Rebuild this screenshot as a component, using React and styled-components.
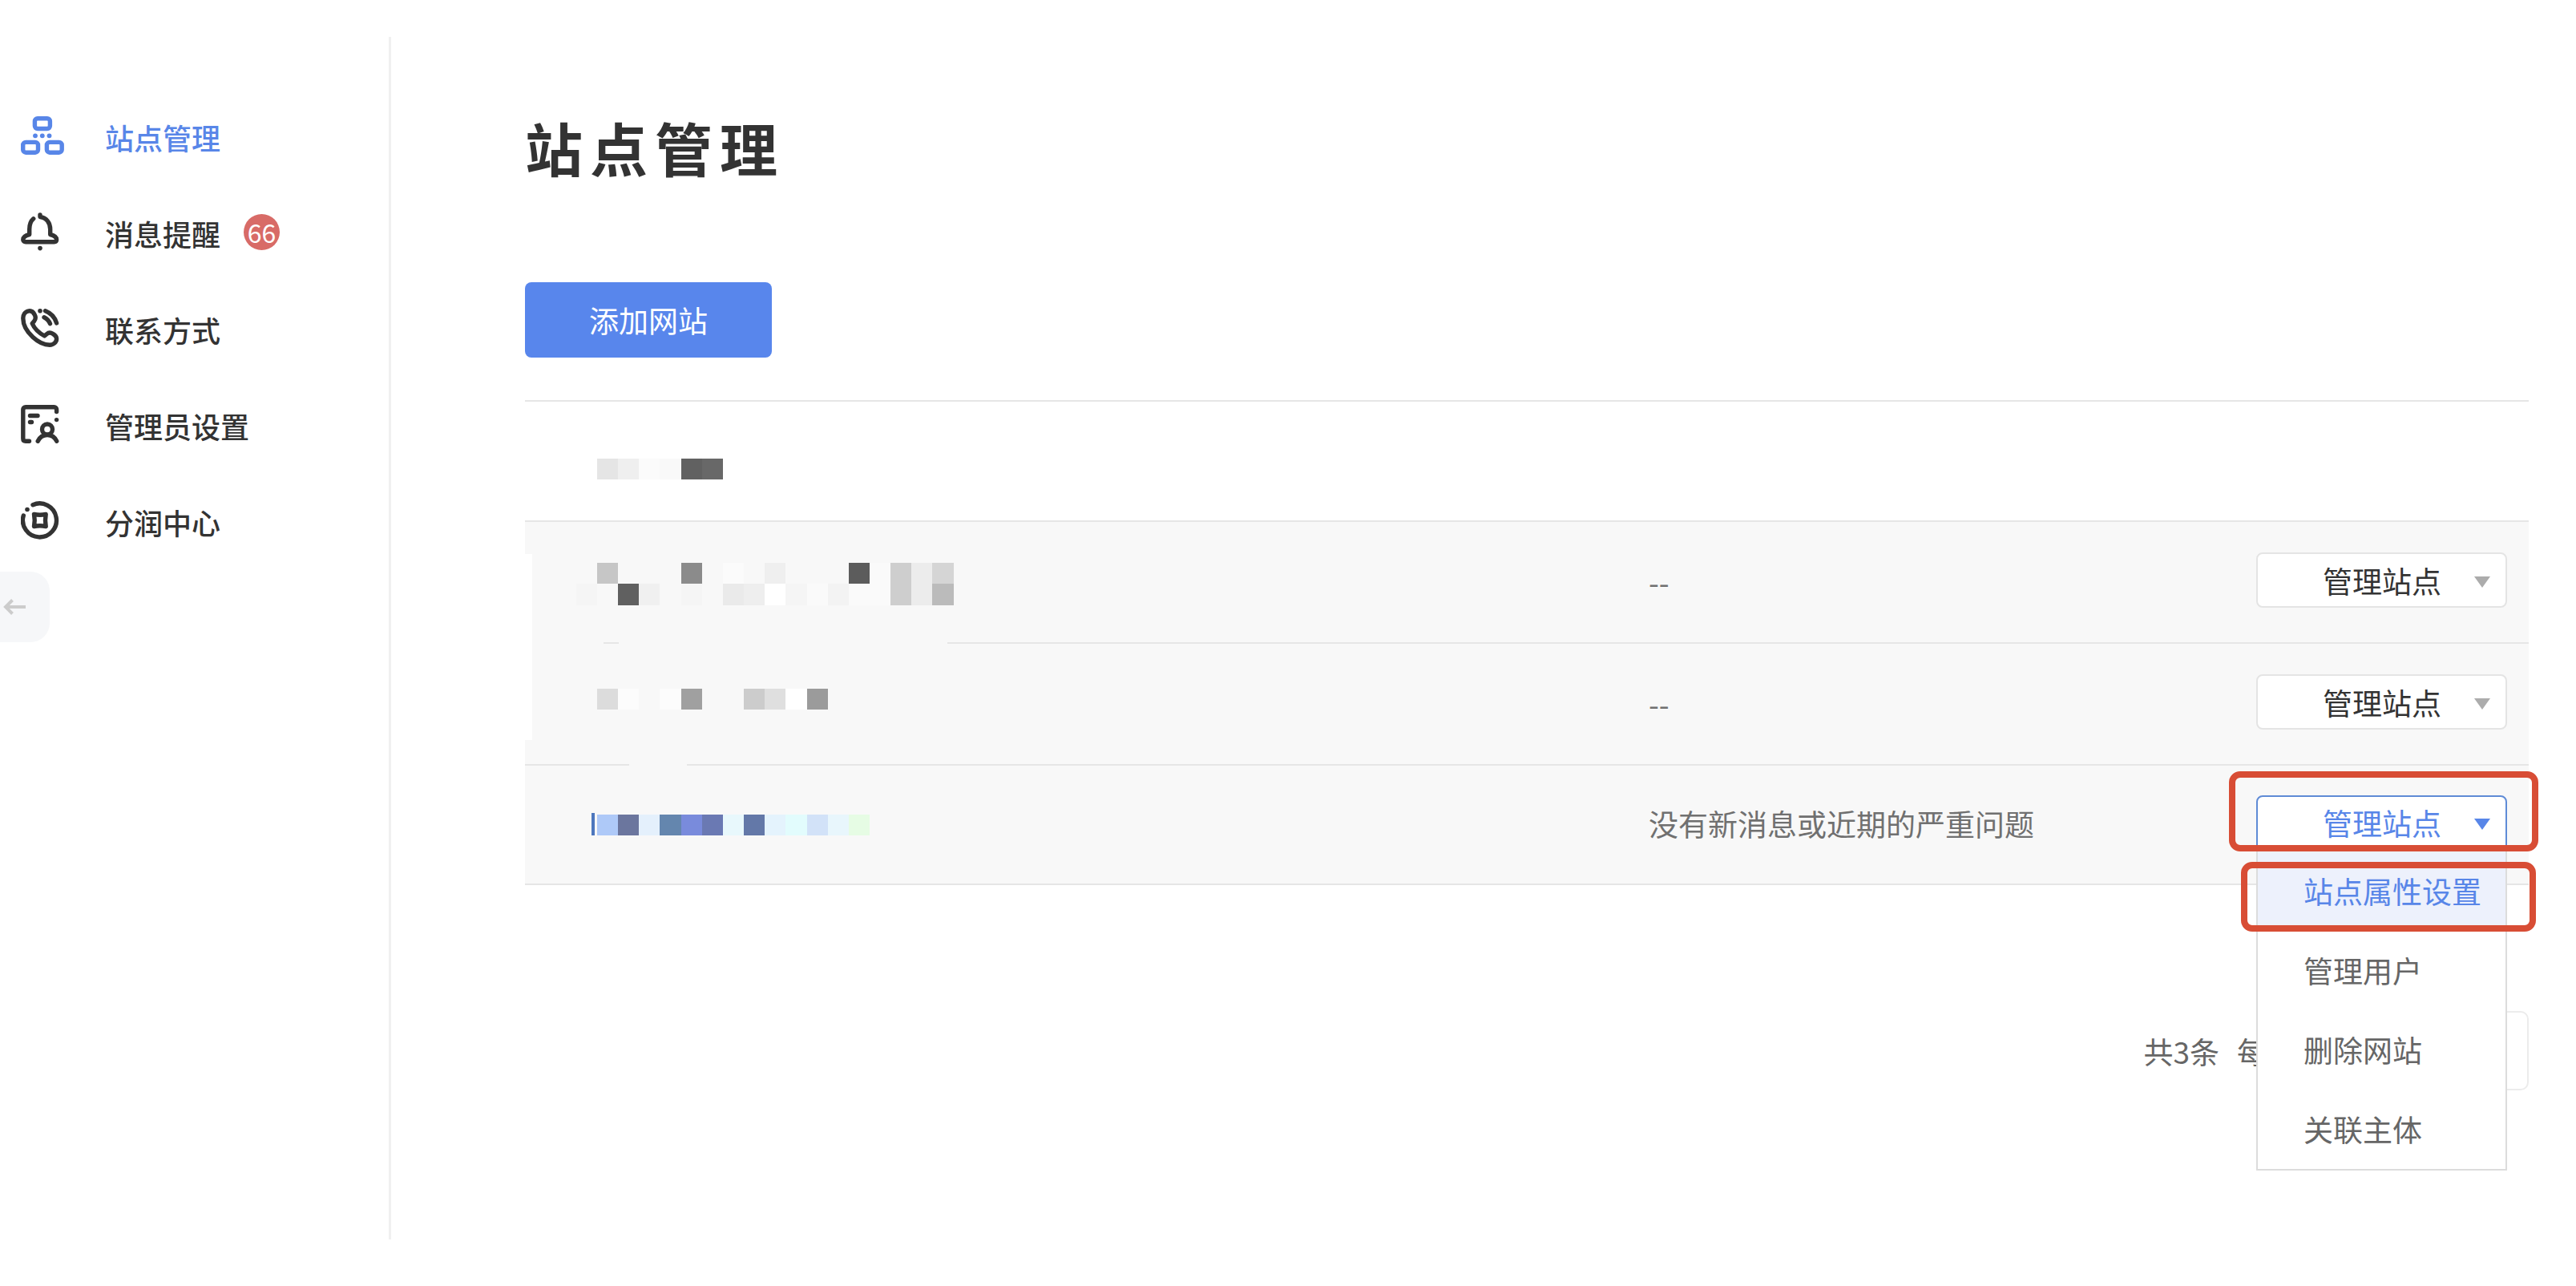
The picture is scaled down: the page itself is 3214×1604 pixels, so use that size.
import React from 'react';
import styled, { createGlobalStyle } from 'styled-components';

const blue = '#5886e8';
const line = '#e6e6e6';

const GlobalStyle = createGlobalStyle`
  * {
    box-sizing: border-box;
  }
  body {
    margin: 0;
    background: #fff;
    color: #333;
    font-family: 'Noto Sans CJK SC', sans-serif;
    font-size: 37px;
    line-height: 54px;
  }
  button, select {
    font: inherit;
  }
`;

const Page = styled.div`
  display: flex;
  min-height: 100vh;
  padding: 46px 0 58px;
`;

const Sidebar = styled.aside`
  flex: none;
  width: 488px;
  padding-top: 63px;
  border-right: 3px solid #f0f0f0;
`;

const NavList = styled.ul`
  margin: 0;
  padding: 0;
  list-style: none;
`;

const NavLink = styled.a`
  display: flex;
  align-items: center;
  height: 120px;
  padding: 4px 0 0 26px;
  color: ${props => (props.$active ? blue : '#333')};
  font-size: 36px;
  font-weight: 500;
  text-decoration: none;
`;

const NavIcon = styled.svg`
  width: 54px;
  height: 48px;
  margin: 0 51px 4px 0;
  fill: none;
  stroke: currentColor;
  stroke-width: 5.4;
  stroke-linecap: round;
  stroke-linejoin: round;

  .dot {
    fill: currentColor;
    stroke: none;
  }
`;

const Badge = styled.span`
  width: 45px;
  height: 45px;
  margin: 0 0 4px 29px;
  border-radius: 50%;
  background: #d86b67;
  color: #fff;
  font-size: 32px;
  font-weight: 400;
  line-height: 45px;
  text-align: center;
`;

const CollapseButton = styled.button`
  display: block;
  width: 62px;
  height: 88px;
  margin-top: 4px;
  padding: 0 0 0 4px;
  border: none;
  border-radius: 0 24px 24px 0;
  background: #f6f7f9;

  svg {
    display: block;
  }
`;

const Main = styled.main`
  flex: 1;
  min-width: 0;
  padding: 84px 59px 0 167px;
`;

const Title = styled.h1`
  margin: 0;
  font-size: 72px;
  font-weight: 700;
  letter-spacing: 9px;
  line-height: 106px;
`;

const AddButton = styled.button`
  display: block;
  width: 308px;
  height: 94px;
  margin: 116px 0 53px;
  padding: 0;
  border: none;
  border-radius: 8px;
  background: #5886ec;
  color: #fff;
`;

const SiteTable = styled.table`
  width: 100%;
  border-top: 2px solid ${line};
  border-spacing: 0;
  table-layout: fixed;

  th, td {
    position: relative;
    height: 152px;
    padding: 0 0 3px 2px;
    border-bottom: 2px solid ${line};
    text-align: left;
  }
  th {
    height: 150px;
  }
  tr:last-child td {
    height: 149px;
  }
  tbody {
    background: #f8f8f8;
    color: #707070;
  }
`;

const NameColumn = styled.col`
  width: 56%;
`;

const ActionColumn = styled.col`
  width: 400px;
`;

const Mosaic = styled.svg`
  position: absolute;
  top: 0;
  left: 0;
  width: 560px;
  height: 152px;
  shape-rendering: crispEdges;
`;

const ActionCell = styled.td`
  && {
    padding: 0 27px 5px 0;
  }
`;

const Dropdown = styled.div`
  position: relative;
  width: 313px;
  margin-left: auto;
`;

const ManageButton = styled.button`
  display: flex;
  align-items: center;
  justify-content: space-between;
  width: 100%;
  height: 69px;
  padding: 0 19px 0 81px;
  border: 2px solid ${props => (props.$open ? '#5f8bd6' : '#e4e4e4')};
  border-radius: ${props => (props.$open ? '8px 8px 0 0' : '8px')};
  background: #fff;
  color: ${props => (props.$open ? blue : '#333')};
`;

const Caret = styled.svg`
  width: 20px;
  height: 14px;
  margin-top: 4px;
  fill: ${props => (props.$open ? blue : '#acacac')};
`;

const Menu = styled.ul`
  position: absolute;
  top: 100%;
  left: 0;
  z-index: 1;
  width: 100%;
  margin: 1px 0 0;
  padding: 0;
  border: 2px solid #dcdcdc;
  border-top: none;
  background: #fff;
  list-style: none;
`;

const MenuItem = styled.button`
  display: block;
  width: 100%;
  height: 99px;
  padding: 0 0 0 57px;
  border: none;
  background: ${props => (props.$active ? '#edf1fc' : '#fff')};
  color: ${props => (props.$active ? blue : '#666')};
  text-align: left;
`;

const Highlight = styled.div`
  position: absolute;
  z-index: 2;
  border: 8px solid #d84d35;
  border-radius: 14px;
  pointer-events: none;
`;

const ButtonHighlight = styled(Highlight)`
  top: -30px;
  right: -39px;
  left: -34px;
  height: 100px;
`;

const ItemHighlight = styled(Highlight)`
  top: 83px;
  right: -36px;
  left: -19px;
  height: 87px;
`;

const Pagination = styled.div`
  display: flex;
  align-items: center;
  justify-content: flex-end;
  margin-top: 157px;
  color: #666;
`;

const PageSizeLabel = styled.label`
  display: flex;
  align-items: center;
  gap: 16px;
  margin-left: 22px;
`;

const PageSize = styled.select`
  width: 274px;
  height: 99px;
  padding: 0 24px 0 188px;
  border: 2px solid #ececec;
  border-radius: 10px;
  background: #fff;
  color: #666;
  appearance: none;
`;

const SiteIcon = () => (
  <NavIcon viewBox="0 0 54 48">
    <rect x="17.4" y="2.7" width="19" height="12.8" rx="3.5" />
    <rect x="2.7" y="32.4" width="18.8" height="12.8" rx="3.5" />
    <rect x="32.4" y="32.4" width="18.8" height="12.8" rx="3.5" />
    <circle className="dot" cx="18" cy="24.3" r="2.9" />
    <circle className="dot" cx="26.8" cy="24.3" r="2.9" />
    <circle className="dot" cx="35.5" cy="24.3" r="2.9" />
  </NavIcon>
);

const BellIcon = () => (
  <NavIcon viewBox="0 0 54 48">
    <path d="M24 3V5.5C32 6.5 36.7 13 36.7 21V27.5C41 28.5 44.6 30.5 44.6 34C44.6 35.8 43.4 36.7 41.5 36.7H6C4 36.7 2.8 35.8 2.8 34C2.8 30.5 6.5 28.5 10.7 27.5V21C10.7 15.5 12 11 15.7 7.8" />
    <circle className="dot" cx="24" cy="44.6" r="2.8" />
  </NavIcon>
);

const PhoneIcon = () => (
  <NavIcon viewBox="0 0 54 48">
    <path d="M10 2.8C5 3.5 2.8 7.5 2.8 12C2.8 22 9 30 15 35.5C22 42 30 45.2 36 45.2C41 45.2 44.6 41.5 44.6 37.5C44.6 34.5 43 33 40 31.3C37 29.6 34.5 29.8 32.5 31.5L29.5 34C24 31 17 25 14.2 18.5L16.5 15.8C18.8 13 18.8 10.5 17.2 7.5C15.5 4 13.5 2.3 10 2.8Z" />
    <path d="M30.5 2.8C37.5 5.5 42.5 11 44.6 18M29 10.8C32.5 12.5 35 15 36.5 18.8" />
    <circle className="dot" cx="24" cy="2.8" r="2.8" />
  </NavIcon>
);

const AdminIcon = () => (
  <NavIcon viewBox="0 0 54 48">
    <path d="M44.6 8.5V6C44.6 4 43.4 2.8 41.5 2.8H6C4 2.8 2.8 4 2.8 6V42C2.8 44 4 45.2 6 45.2H10.5M11.5 13.5H21M11.5 21.5H13.5" />
    <circle cx="33" cy="30.5" r="6.5" />
    <path d="M21.2 45.2C23.5 40.5 27.5 37.5 33 37.5C38.5 37.5 42.5 40.5 44.7 45.2" />
    <circle className="dot" cx="44.6" cy="18.6" r="2.7" />
  </NavIcon>
);

const CoinIcon = () => (
  <NavIcon viewBox="0 0 54 48">
    <path d="M15 4.7A21 21 0 1 1 3.3 18" />
    <path d="M16.5 16.5Q23.8 18 31.2 16.5Q29.8 24 31.2 31.5Q23.8 30 16.5 31.5Q18 24 16.5 16.5Z" />
    <circle className="dot" cx="8" cy="10.5" r="2.8" />
  </NavIcon>
);

const navItems = [
  { text: '站点管理', icon: SiteIcon, active: true },
  { text: '消息提醒', icon: BellIcon, badge: 66 },
  { text: '联系方式', icon: PhoneIcon },
  { text: '管理员设置', icon: AdminIcon },
  { text: '分润中心', icon: CoinIcon },
];

const menuItems = ['站点属性设置', '管理用户', '删除网站', '关联主体'];

// tiles: [column, fill, line]
// erase: strips of the row hidden along with the name [x, y, width, height, fill]
const headTiles = [
  [0, '#e5e5e5'], [1, '#efefef'], [2, '#fbfbfb'], [3, '#f9f9f9'], [4, '#616161'], [5, '#686868'],
];

const sites = [
  {
    top: 51,
    status: '--',
    erase: [[0, 40, 9, 112, '#fff'], [9, 149, 89, 3, '#f8f8f8'], [117, 149, 410, 3, '#f8f8f8']],
    tiles: [
      [0, '#c6c6c6'], [4, '#8b8b8b'], [6, '#fbfbfb'], [8, '#efefef'], [12, '#5c5c5c'],
      [13, '#fafafa'], [14, '#cecece'], [15, '#ececec'], [16, '#d5d5d5'],
      [-1, '#f5f5f5', 1], [1, '#606060', 1], [2, '#f0f0f0', 1], [4, '#f5f5f5', 1], [6, '#eaeaea', 1],
      [7, '#eee', 1], [8, '#fff', 1], [9, '#f5f5f5', 1], [10, '#fafafa', 1], [11, '#f3f3f3', 1],
      [12, '#fafafa', 1], [13, '#fafafa', 1], [14, '#cecece', 1], [15, '#ececec', 1], [16, '#bbb', 1],
    ],
  },
  {
    top: 56,
    status: '--',
    erase: [[0, 0, 9, 120, '#fff'], [130, 149, 72, 3, '#f8f8f8']],
    tiles: [
      [0, '#dcdcdc'], [1, '#fcfcfc'], [3, '#fcfcfc'], [4, '#a0a0a0'],
      [7, '#ccc'], [8, '#dfdfdf'], [9, '#fff'], [10, '#9b9b9b'],
    ],
  },
  {
    top: 61,
    status: '没有新消息或近期的严重问题',
    open: true,
    erase: [[83, 59, 4, 28, '#4d77bd']],
    tiles: [
      [0, '#aec9f8'], [1, '#6b769e'], [2, '#e4f0fc'], [3, '#6486ae'], [4, '#798bdc'], [5, '#6a79b3'],
      [6, '#e8f8fc'], [7, '#6378a8'], [8, '#e4f3fd'], [9, '#e2fcfd'], [10, '#d2e2f8'],
      [11, '#e8f6fc'], [12, '#e6fce4'],
    ],
  },
];

const HiddenName = ({ top, tiles, erase = [] }) => (
  <Mosaic viewBox="0 0 560 152" aria-hidden="true">
    {erase.map(([x, y, width, height, fill], index) => (
      <rect key={index} x={x} y={y} width={width} height={height} fill={fill} />
    ))}
    {tiles.map(([column, fill, row = 0], index) => (
      <rect key={index} x={90 + column * 26.15} y={top + row * 26.3} width="26.15" height="26.3" fill={fill} />
    ))}
  </Mosaic>
);

const ManageSite = ({ open }) => (
  <Dropdown>
    <ManageButton type="button" $open={open} aria-expanded={!!open}>
      管理站点
      <Caret $open={open} viewBox="0 0 20 14"><path d="M0 0H20L10 14Z" /></Caret>
    </ManageButton>
    {open && (
      <>
        <Menu>
          {menuItems.map((item, index) => (
            <li key={item}>
              <MenuItem type="button" $active={index === 0}>{item}</MenuItem>
            </li>
          ))}
        </Menu>
        <ButtonHighlight />
        <ItemHighlight />
      </>
    )}
  </Dropdown>
);

const App = () => (
  <Page>
    <GlobalStyle />
    <Sidebar>
      <nav>
        <NavList>
          {navItems.map(({ text, icon: Icon, active, badge }) => (
            <li key={text}>
              <NavLink href="#" $active={active}>
                <Icon />
                {text}
                {badge && <Badge>{badge}</Badge>}
              </NavLink>
            </li>
          ))}
        </NavList>
      </nav>
      <CollapseButton type="button" aria-label="收起">
        <svg width="28" height="20" viewBox="0 0 28 20" fill="none" stroke="#ccc" strokeWidth="4">
          <path d="M28 10H3M11.5 1.5L3 10L11.5 18.5" />
        </svg>
      </CollapseButton>
    </Sidebar>
    <Main>
      <Title>站点管理</Title>
      <AddButton type="button">添加网站</AddButton>
      <SiteTable>
        <colgroup>
          <NameColumn />
          <col />
          <ActionColumn />
        </colgroup>
        <thead>
          <tr>
            <th><HiddenName top={71} tiles={headTiles} /></th>
            <th />
            <th />
          </tr>
        </thead>
        <tbody>
          {sites.map((site, index) => (
            <tr key={index}>
              <td><HiddenName top={site.top} tiles={site.tiles} erase={site.erase} /></td>
              <td>{site.status}</td>
              <ActionCell><ManageSite open={site.open} /></ActionCell>
            </tr>
          ))}
        </tbody>
      </SiteTable>
      <Pagination>
        <span>共3条</span>
        <PageSizeLabel>
          每页
          <PageSize defaultValue="10">
            <option>10</option>
            <option>20</option>
          </PageSize>
        </PageSizeLabel>
      </Pagination>
    </Main>
  </Page>
);

export default App;
